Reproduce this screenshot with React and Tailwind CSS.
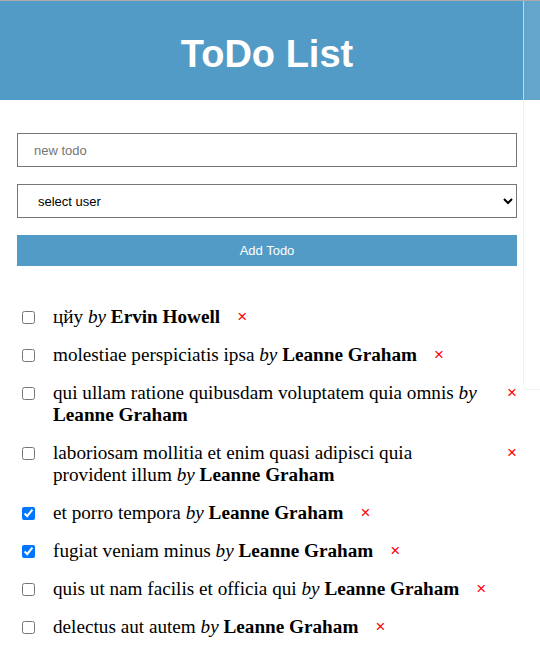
import { useState } from 'react'

const initialTodos = [
  { id: 1, title: 'цйу', user: 'Ervin Howell', completed: false },
  { id: 2, title: 'molestiae perspiciatis ipsa', user: 'Leanne Graham', completed: false },
  { id: 3, title: 'qui ullam ratione quibusdam voluptatem quia omnis', user: 'Leanne Graham', completed: false },
  { id: 4, title: 'laboriosam mollitia et enim quasi adipisci quia provident illum', user: 'Leanne Graham', completed: false },
  { id: 5, title: 'et porro tempora', user: 'Leanne Graham', completed: true },
  { id: 6, title: 'fugiat veniam minus', user: 'Leanne Graham', completed: true },
  { id: 7, title: 'quis ut nam facilis et officia qui', user: 'Leanne Graham', completed: false },
  { id: 8, title: 'delectus aut autem', user: 'Leanne Graham', completed: false }
]

function TodoItem({ todo, onToggle, onRemove }) {
  return (
    <li className="flex items-start py-[8px]">
      <input
        type="checkbox"
        checked={todo.completed}
        onChange={() => onToggle(todo.id)}
        className="mt-[5px] ml-[5px] h-[13px] w-[13px] shrink-0"
      />
      <span className="ml-[18px] text-[19.2px] leading-[22px] text-black">
        {todo.title} <i>by</i> <b>{todo.user}</b>
      </span>
      <button
        onClick={() => onRemove(todo.id)}
        className="ml-[17px] shrink-0 text-[17px] leading-[22px] text-[#ff0000] font-['Liberation_Sans',Arial,sans-serif]"
      >
        ×
      </button>
    </li>
  )
}

export default function App() {
  const [todos, setTodos] = useState(initialTodos)
  const [title, setTitle] = useState('')

  const toggle = (id) =>
    setTodos((list) => list.map((t) => (t.id === id ? { ...t, completed: !t.completed } : t)))
  const remove = (id) => setTodos((list) => list.filter((t) => t.id !== id))

  return (
    <div className="relative min-h-[663px] w-[540px] overflow-hidden border-t border-[#ababab] bg-white font-['Liberation_Serif','Times_New_Roman',serif]">
      {/* Header */}
      <header className="h-[99px] bg-[#529bc6] pt-[31px] pr-[6px] text-center">
        <h1 className="text-[38px] leading-[44px] font-bold text-white font-['Liberation_Sans',Arial,sans-serif]">
          ToDo List
        </h1>
      </header>

      {/* Form */}
      <form
        className="mx-[17px] mt-[33px] flex w-[500px] flex-col font-['Liberation_Sans',Arial,sans-serif] text-[13px]"
        onSubmit={(e) => e.preventDefault()}
      >
        <input
          type="text"
          value={title}
          onChange={(e) => setTitle(e.target.value)}
          placeholder="new todo"
          className="h-[34px] w-full border border-[#767676] px-4 text-[13px] placeholder:text-[#757575]"
        />
        <select
          defaultValue=""
          className="mt-[17px] h-[34px] w-full border border-[#767676] bg-white px-4 text-[13px] text-black"
        >
          <option value="">select user</option>
          <option value="1">Leanne Graham</option>
          <option value="2">Ervin Howell</option>
        </select>
        <button
          type="submit"
          className="mt-[17px] h-[31px] w-full bg-[#529bc6] text-[13px] text-white"
        >
          Add Todo
        </button>
      </form>

      {/* List */}
      <ul className="mx-[17px] mt-[32px] w-[500px]">
        {todos.map((todo) => (
          <TodoItem key={todo.id} todo={todo} onToggle={toggle} onRemove={remove} />
        ))}
      </ul>

      {/* side panel overlay */}
      <div className="absolute top-0 right-0 h-[389px] w-[17px] rounded-bl-[5px] border-b border-l border-[#ececec]/70 bg-white/10"></div>
    </div>
  )
}
